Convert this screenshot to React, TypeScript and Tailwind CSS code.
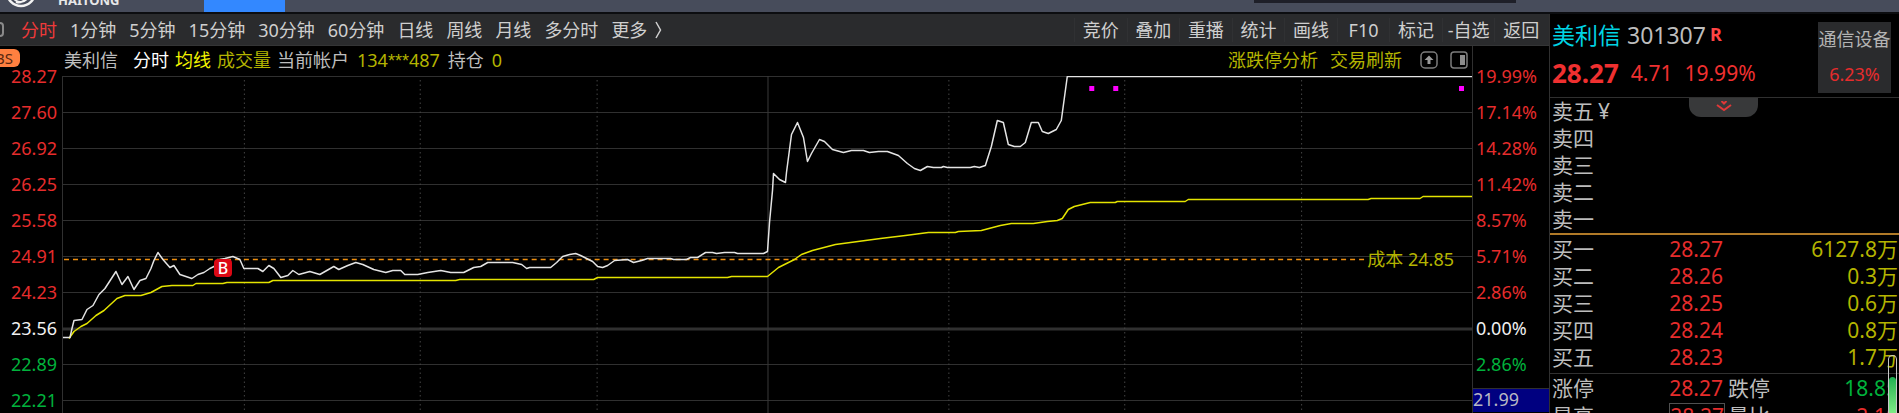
import { ChevronDown } from "lucide-react";
import clsx from "clsx";

const PERIODS = ["分时", "1分钟", "5分钟", "15分钟", "30分钟", "60分钟", "日线", "周线", "月线", "多分时"];
const ACTIONS = ["竞价", "叠加", "重播", "统计", "画线", "F10", "标记", "-自选", "返回"];

const UP = "text-[#e62c2c]";
const FLAT = "text-[#f0f0f0]";
const DOWN = "text-[#00b23c]";

const LEVELS = [
  { price: "28.27", percent: "19.99%", tone: UP },
  { price: "27.60", percent: "17.14%", tone: UP },
  { price: "26.92", percent: "14.28%", tone: UP },
  { price: "26.25", percent: "11.42%", tone: UP },
  { price: "25.58", percent: "8.57%", tone: UP },
  { price: "24.91", percent: "5.71%", tone: UP },
  { price: "24.23", percent: "2.86%", tone: UP },
  { price: "23.56", percent: "0.00%", tone: FLAT },
  { price: "22.89", percent: "2.86%", tone: DOWN },
  { price: "22.21", percent: null, tone: DOWN },
];

const ASKS = ["卖五", "卖四", "卖三", "卖二", "卖一"];

const BIDS = [
  { label: "买一", price: "28.27", volume: "6127.8万" },
  { label: "买二", price: "28.26", volume: "0.3万" },
  { label: "买三", price: "28.25", volume: "0.6万" },
  { label: "买四", price: "28.24", volume: "0.8万" },
  { label: "买五", price: "28.23", volume: "1.7万" },
];

// Plot space: x 62..1472, y 76..413
const GRID_Y = [76, 112, 148, 184, 220, 256, 292, 364, 400];
const GRID_X = [243, 419, 596, 948, 1124, 1301];

const PRICE_LINE =
  "62,337 69,337 71,328 73,320 81,319 86,309 92,305 98,294 104,288 115,271 121,284 127,276 133,289 139,280 145,278 150,268 153,260 157,252 162,259 169,267 173,265 179,274 191,278 197,274 203,272 209,268 215,265 219,259 224,258 232,256 239,259 243,268 257,268 262,271 268,265 273,268 280,277 287,275 292,270 298,274 309,271 319,274 333,266 338,269 347,265 355,262 362,264 373,269 385,272 392,270 400,270 404,274 417,274 427,272 440,270 450,272 463,272 473,267 480,266 487,262 512,262 521,264 526,268 529,267 550,267 556,262 562,256 569,254 575,253 580,255 592,261 597,266 602,267 607,265 614,260 627,259 633,262 641,260 647,258 670,258 673,259 686,259 690,257 697,257 705,252 712,252 716,253 724,252 734,252 737,253 763,253 767,251 769,222 772,190 773,173 779,179 785,182 786,172 791,134 797,122 803,137 807,161 811,153 819,139 824,141 832,149 843,152 851,150 863,150 869,152 878,151 887,151 898,155 907,163 914,168 920,170 927,166 933,167 941,167 943,166 947,167 970,167 974,166 979,167 985,165 991,146 997,120 1003,122 1008,144 1014,146 1020,146 1025,142 1031,122 1038,122 1042,131 1048,133 1056,129 1061,120 1064,98 1067,76 1472,76";

const AVERAGE_LINE =
  "68,338 73,331 80,326 86,323 95,315 103,310 116,298 124,295 140,295 150,292 161,286 171,285 192,285 195,283 222,283 226,282 268,282 272,280 455,280 459,279 593,279 597,277 727,277 731,276 767,276 778,267 794,259 801,254 812,250 835,244 850,242 880,238 905,235 928,232 955,232 958,231 981,230 1000,225 1011,223 1033,223 1047,221 1057,220 1062,218 1068,209 1074,206 1082,204 1090,202 1115,202 1117,201 1185,201 1188,199 1368,199 1371,198 1420,198 1423,196 1472,196";

const ALERTS = [1091, 1115, 1461];

function TitleBar() {
  return (
    <header className="flex h-[14px] items-start overflow-hidden border-b-2 border-[#0c0d10] bg-[#474c5b]">
      <svg viewBox="0 0 32 32" className="-mt-6 ml-[5px] size-8 shrink-0" aria-hidden="true">
        <circle cx="16" cy="16" r="14" fill="none" stroke="#f2f2f2" strokeWidth="2.5" />
        <path d="M7 20c5 9 13 7 17 0M11 26c6 2 12-3 12-10" fill="none" stroke="#f2f2f2" strokeWidth="2" />
      </svg>
      <span className="-mt-[10px] ml-[21px] w-[60px] text-[13px] leading-5 font-bold text-[#e8e8e8]">HAITONG</span>
      <span className="ml-[86px] h-3 w-[81px] shrink-0 bg-[#3388ff]" />
      <span className="mr-[383px] ml-auto h-[3px] w-[262px] shrink-0 bg-[#1e1f28]" />
    </header>
  );
}

function Toolbar() {
  return (
    <nav className="flex h-8 items-center justify-between border-b border-[#343536] bg-[#2a2b2d] text-[#cfcfcf]">
      <div className="flex items-center gap-[13px]">
        <span className="-mr-[9px] h-[15px] w-1 rounded-r-sm border-2 border-l-0 border-[#8a8a8a]" />
        {PERIODS.map((period, i) => (
          <button key={period} type="button" className={clsx("whitespace-nowrap", i === 0 && "ml-[13px] text-[#ee3a3a]")}>
            {period}
          </button>
        ))}
        <button type="button" className="flex items-center gap-2 whitespace-nowrap">
          更多
          <svg viewBox="0 0 7 18" className="h-[18px] w-[7px]" fill="none" stroke="currentColor" strokeWidth="1.5">
            <path d="M1 1 5.5 9 1 17" />
          </svg>
        </button>
      </div>
      <div className="grid w-[475px] grid-cols-9 pr-[2px]">
        {ACTIONS.map((action) => (
          <button key={action} type="button" className="border-l border-[#303133] whitespace-nowrap">
            {action}
          </button>
        ))}
      </div>
    </nav>
  );
}

function InfoRow() {
  return (
    <div className="flex h-[30px] items-center justify-between pr-1 pb-[2px] pl-[2px] whitespace-nowrap text-[#bdbdbd]">
      <div className="flex items-center gap-[6px]">
        <span className="mr-[9px]">美利信</span>
        <span className="text-white">分时</span>
        <span className="text-[#f4f400]">均线</span>
        <span className="text-[#b4b400]">成交量</span>
        <span>当前帐户</span>
        <span className="ml-[2px] text-[#b4b400]">
          134<span className="font-['Liberation_Sans']">***</span>487
        </span>
        <span className="ml-[2px]">持仓</span>
        <span className="ml-[2px] text-[#b4b400]">0</span>
      </div>
      <div className="flex items-center gap-3">
        <button type="button" className="text-[#b4b400]">涨跌停分析</button>
        <button type="button" className="text-[#b4b400]">交易刷新</button>
        <button type="button" aria-label="上移" className="ml-[6px]">
          <svg viewBox="0 0 18 18" className="size-[18px]" fill="none" stroke="#7c7c7c">
            <rect x="1" y="1" width="16" height="16" rx="4" strokeWidth="1.5" />
            <path d="M9 4.5 13.5 9h-3v4h-3V9h-3Z" fill="#9a9a9a" stroke="none" />
          </svg>
        </button>
        <button type="button" aria-label="侧栏">
          <svg viewBox="0 0 18 18" className="size-[18px]" fill="none" stroke="#7c7c7c">
            <rect x="1" y="1" width="16" height="16" rx="3" strokeWidth="1.5" />
            <rect x="10" y="4" width="5" height="10" fill="#8c8c8c" stroke="none" />
          </svg>
        </button>
      </div>
    </div>
  );
}

function Plot() {
  return (
    <div className="relative">
      <svg
        viewBox="62 76 1410 337"
        preserveAspectRatio="none"
        className="block h-[337px] w-full border-l border-[#303030]"
        fill="none"
      >
        <g stroke="#303030" transform="translate(0 .5)">
          {GRID_Y.map((y) => (
            <path key={y} d={`M62 ${y}H1472`} />
          ))}
          <path d="M62 328.5H1472" strokeWidth="3" />
        </g>
        <g stroke="#444444" strokeDasharray="1.5 3" transform="translate(.5 0)">
          {GRID_X.map((x) => (
            <path key={x} d={`M${x} 80V413`} />
          ))}
        </g>
        <path d="M767.5 76V413" stroke="#3a3a3a" />
        <path d="M63 259.5H1364" stroke="#f09010" strokeWidth="1.5" strokeDasharray="5 4" />
        <g transform="translate(0 .5)" strokeWidth="1.5" strokeLinejoin="round">
          <polyline points={AVERAGE_LINE} stroke="#e4e400" />
          <polyline points={PRICE_LINE} stroke="#e4e4e4" />
        </g>
        {ALERTS.map((x) => (
          <rect key={x} x={x - 2} y="86" width="5" height="5" fill="#ff00ff" />
        ))}
      </svg>
      {/* buy marker, pinned to the trade time */}
      <span className="absolute top-[183px] left-[11%] -ml-[3px] size-[18px] rounded bg-[#dc0814] text-center text-[16px] leading-[18px] font-medium text-white">
        B
      </span>
      <span className="absolute top-[170px] right-[18px] leading-[26px] whitespace-nowrap text-[#b4b400]">成本 24.85</span>
    </div>
  );
}

function PriceAxis() {
  return (
    <div className="relative w-[62px] shrink-0 pt-3 pr-[5px] text-right">
      <span className="absolute top-[3px] left-0 flex h-[18px] w-5 justify-end rounded-r-md bg-[#ff8040] pr-[7px] text-[15px] leading-[18px] text-[#5a2810]">
        BS
      </span>
      {LEVELS.map((level) => (
        <div key={level.price} className={clsx("h-9 leading-9", level.tone)}>
          {level.price}
        </div>
      ))}
    </div>
  );
}

function PercentAxis() {
  return (
    <div className="w-[77px] shrink-0 border-l border-[#303030] pt-3">
      {LEVELS.filter((level) => level.percent).map((level) => (
        <div key={level.price} className={clsx("h-9 pl-[3px] leading-9", level.tone)}>
          {level.percent}
        </div>
      ))}
      <div className="mt-[6px] h-6 border-t border-[#303030] bg-[#000080] leading-[21px] text-[#b8b8c4]">21.99</div>
    </div>
  );
}

function Columns() {
  return (
    <colgroup>
      <col className="w-[70px]" />
      <col className="w-[103px]" />
      <col />
    </colgroup>
  );
}

function QuotePanel() {
  return (
    <aside className="relative w-[350px] shrink-0 border-l border-[#303030] text-[21px] text-[#bdbdbd]">
      <div className="flex h-[84px] justify-between border-b border-[#303030] pt-2 pr-2 pl-[2px]">
        <div className="whitespace-nowrap">
          <h1 className="flex text-[23px] leading-[27px]">
            <span className="text-[#00d4e4]">美利信</span>
            <span className="ml-[6px]">301307</span>
            <span className="ml-1 text-[18px] leading-6 font-bold text-[#ff4444]">R</span>
          </h1>
          <div className="flex items-center gap-3 pt-2 leading-8 text-[#f03030]">
            <strong className="text-[26px]">28.27</strong>
            <span>4.71</span>
            <span>19.99%</span>
          </div>
        </div>
        <a href="#sector" className="h-[71px] w-[73px] bg-[#2a2b2d] text-center text-[18px] leading-[35px] whitespace-nowrap text-[#b4b4b4]">
          <span className="block">通信设备</span>
          <span className="block text-[#e62c2c]">6.23%</span>
        </a>
      </div>

      <button
        type="button"
        aria-label="展开"
        className="absolute top-[84px] left-[139px] flex h-[19px] w-[69px] flex-col items-center rounded-b-xl bg-[#38393a] pt-[3px] text-[#e03838]"
      >
        <svg viewBox="0 0 16 12" className="h-3 w-4" fill="none" stroke="currentColor" strokeWidth="2">
          <path d="M1 4l7 5 7-5" />
          <path d="M5.5 0 8 2.5 10.5 0" />
        </svg>
      </button>

      <table className="w-full table-fixed">
        <Columns />
        <tbody>
          {ASKS.map((label, i) => (
            <tr key={label} className="h-[27px] leading-[27px]">
              <th scope="row" className="pl-[2px] text-left font-normal whitespace-nowrap">
                {label}
                {i === 0 && <span className="pl-1">¥</span>}
              </th>
              <td />
              <td />
            </tr>
          ))}
        </tbody>
      </table>

      <div className="border-y border-t-2 border-t-[#b07a28] border-b-[#303030] pt-px pb-[2px]">
        <table className="w-full table-fixed">
          <Columns />
          <tbody>
            {BIDS.map((bid) => (
              <tr key={bid.label} className="h-[27px] leading-[27px]">
                <th scope="row" className="pl-[2px] text-left font-normal">{bid.label}</th>
                <td className="text-right text-[#e62c2c]">{bid.price}</td>
                <td className="pr-px text-right text-[#b4b400]">{bid.volume}</td>
              </tr>
            ))}
          </tbody>
        </table>
      </div>

      <table className="w-full table-fixed">
        <colgroup>
          <col className="w-[70px]" />
          <col className="w-[105px]" />
          <col className="w-[60px]" />
          <col />
        </colgroup>
        <tbody>
          <tr className="h-[29px] leading-[29px]">
            <th scope="row" className="pl-[2px] text-left font-normal">涨停</th>
            <td className="pr-[2px] text-right text-[#e62c2c]">28.27</td>
            <th scope="row" className="pl-[3px] text-left font-normal">跌停</th>
            <td className="pr-px text-right text-[#00b23c]">18.85</td>
          </tr>
          <tr className="leading-6">
            <th scope="row" className="pl-[2px] text-left font-normal">最高</th>
            <td className="text-right text-[#e62c2c]">
              <span className="inline-block border border-[#505050] leading-6">28.27</span>
            </td>
            <th scope="row" className="pl-[3px] text-left font-normal">量比</th>
            <td className="pr-px text-right text-[#e62c2c]">2.10</td>
          </tr>
        </tbody>
      </table>

      {/* scroll gauge over the volume column */}
      <div className="absolute top-[341px] right-[2px] h-[66px] w-[9px] rounded-t border border-[#c8c8c8] pt-[21px]">
        <div className="h-full rounded-t-sm bg-linear-to-b from-[#18b050] to-[#8cf890]" />
      </div>
    </aside>
  );
}

export default function App() {
  return (
    <div className="flex h-screen flex-col overflow-hidden bg-black font-['Noto_Sans','Noto_Sans_CJK_SC',sans-serif] text-[18px] leading-6">
      <TitleBar />
      <div className="flex min-h-0 flex-1">
        <main className="min-w-0 flex-1">
          <Toolbar />
          <div className="flex">
            <PriceAxis />
            <div className="min-w-0 flex-1">
              <InfoRow />
              <Plot />
            </div>
            <PercentAxis />
          </div>
        </main>
        <QuotePanel />
      </div>
    </div>
  );
}
